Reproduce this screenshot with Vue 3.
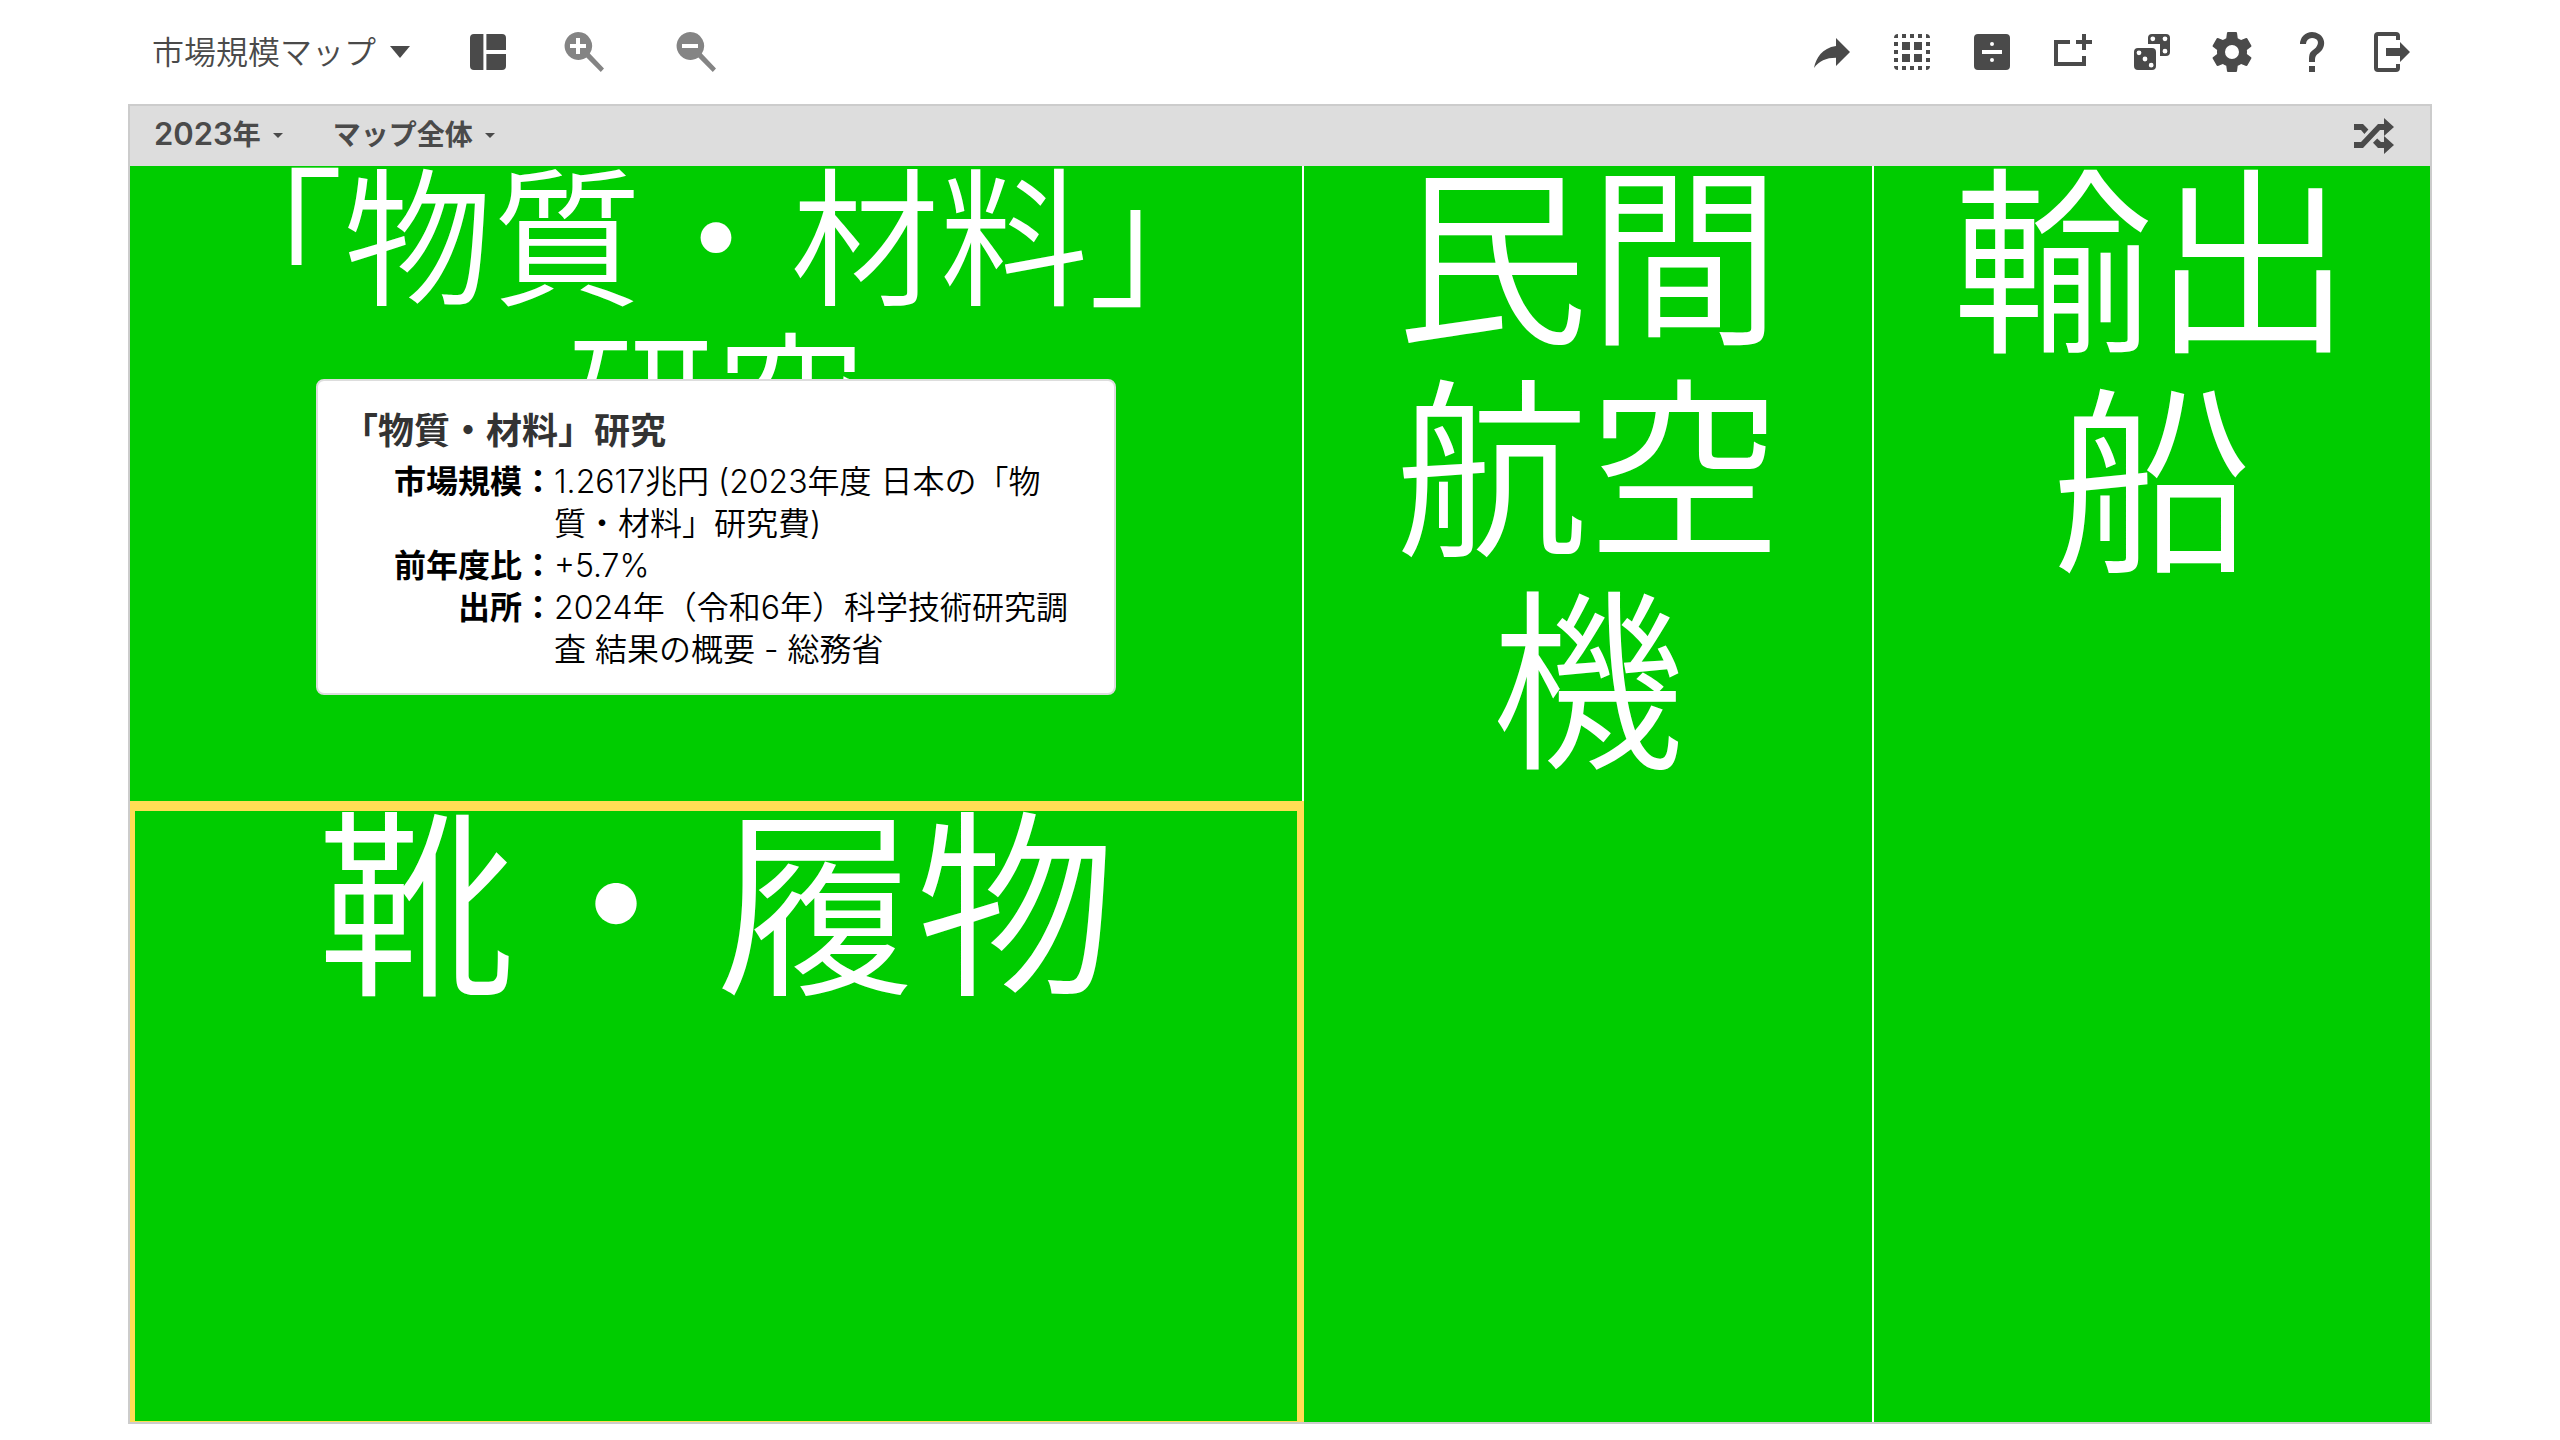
<template>
  <div class="page">
    <header class="toolbar">
      <button class="menu" type="button">市場規模マップ<span class="caret"></span></button>
      <button class="tool layout" type="button" aria-label="レイアウト">
        <svg viewBox="0 0 24 24"><path d="M5 3h4.700v18H5a2 2 0 0 1-2-2V5a2 2 0 0 1 2-2zM11.200 3H19a2 2 0 0 1 2 2v6h-9.800zM11.200 13H21v6a2 2 0 0 1-2 2h-7.800z" /></svg>
      </button>
      <button class="tool zoom" type="button" aria-label="拡大">
        <svg viewBox="0 0 24 24"><path fill-rule="evenodd" d="M9 2a7 7 0 0 1 5.900 10.800L22 20.200 20.400 22l-7.200-7.200A7 7 0 1 1 9 2zM8 5v3H5v2h3v3h2v-3h3V8h-3V5z" /></svg>
      </button>
      <button class="tool zoom" type="button" aria-label="縮小">
        <svg viewBox="0 0 24 24"><path fill-rule="evenodd" d="M9 2a7 7 0 0 1 5.900 10.800L22 20.200 20.400 22l-7.200-7.200A7 7 0 1 1 9 2zM5 8v2h8V8z" /></svg>
      </button>
      <div class="actions">
        <button v-for="a in actions" :key="a.label" class="tool" type="button" :aria-label="a.label">
          <svg viewBox="0 0 24 24"><path fill-rule="evenodd" :d="a.d" /></svg>
        </button>
      </div>
    </header>
    <main class="frame">
      <div class="bar">
        <button class="filter" type="button">
          <span><span class="digits">2023</span>年</span><span class="caret small"></span>
        </button>
        <button class="filter" type="button">マップ全体<span class="caret small"></span></button>
        <button class="tool shuffle" type="button" aria-label="シャッフル">
          <svg viewBox="0 0 24 24"><path d="M17 3l5 4.500-5 4.500V9h-2l-8.500 9H2v-3h3.500L14 6h3zM2 6h4.500l2.700 2.800-2 2.200L5.500 9H2zM13.600 13.300L15.500 15H17v-3l5 4.500-5 4.500v-3h-3l-2.500-2.600z" /></svg>
        </button>
      </div>
      <div class="map">
        <div class="column">
          <section class="tile research">
            <h1>「物質・材料」<br />研究</h1>
            <aside class="tip">
              <h2>「物質・材料」研究</h2>
              <dl>
                <template v-for="r in rows" :key="r.term">
                  <dt>{{ r.term }}：</dt>
                  <dd>{{ r.text }}</dd>
                </template>
              </dl>
            </aside>
          </section>
          <section class="tile shoes"><h1>靴・履物</h1></section>
        </div>
        <section class="tile aircraft"><h1>民間<br />航空<br />機</h1></section>
        <section class="tile ship"><h1>輸出<br />船</h1></section>
      </div>
    </main>
  </div>
</template>

<script setup>
const rows = [
  { term: '市場規模', text: '1.2617兆円 (2023年度 日本の「物質・材料」研究費)' },
  { term: '前年度比', text: '+5.7%' },
  { term: '出所', text: '2024年（令和6年）科学技術研究調査 結果の概要 - 総務省' }
]

const dot = (x, y, r = 1) => `M${x - r} ${y}a${r} ${r} 0 1 0 ${2 * r} 0a${r} ${r} 0 1 0 ${-2 * r} 0z`

const actions = [
  { label: '共有', d: 'M14 5l7 7-7 7v-4.100C9 14.900 5.500 16.500 3 20c1-5 4-10 11-11z' },
  {
    label: '選択',
    d: 'M5 3v2H3a2 2 0 0 1 2-2zM7 3h2v2H7zM11 3h2v2h-2zM15 3h2v2h-2zM19 3a2 2 0 0 1 2 2h-2zM3 7h2v2H3zM19 7h2v2h-2zM3 11h2v2H3zM19 11h2v2h-2zM3 15h2v2H3zM19 15h2v2h-2zM3 19h2v2a2 2 0 0 1-2-2zM7 19h2v2H7zM11 19h2v2h-2zM15 19h2v2h-2zM19 19h2a2 2 0 0 1-2 2zM7 7h4v4H7zM13 7h4v4h-4zM7 13h4v4H7zM13 13h4v4h-4z'
  },
  {
    label: '計算',
    d: 'M5 3h14a2 2 0 0 1 2 2v14a2 2 0 0 1-2 2H5a2 2 0 0 1-2-2V5a2 2 0 0 1 2-2zM7 11v2h10v-2z' + dot(12, 8) + dot(12, 16)
  },
  { label: '追加', d: 'M3 6h8v2H5v9h12v-3h2v5H3zM17 3h2v3h3v2h-3v3h-2V8h-3V6h3z' },
  {
    label: 'ランダム',
    d: 'M5 10h7a2 2 0 0 1 2 2v7a2 2 0 0 1-2 2H5a2 2 0 0 1-2-2v-7a2 2 0 0 1 2-2zM12 3h7a2 2 0 0 1 2 2v7a2 2 0 0 1-2 2h-3V8h-6V5a2 2 0 0 1 2-2z' +
      dot(5.5, 12.4, 1.2) + dot(8.5, 15.5, 1.2) + dot(11.6, 18.6, 1.2) + dot(12.4, 5.4, 1.2) + dot(18.5, 5.4, 1.2) + dot(18.5, 11.6, 1.2)
  },
  {
    label: '設定',
    d: 'M12 15.500A3.500 3.500 0 0 1 8.500 12 3.500 3.500 0 0 1 12 8.500a3.500 3.500 0 0 1 3.500 3.500 3.500 3.500 0 0 1-3.500 3.500m7.430-2.530c.04-.32.07-.64.07-.97s-.03-.66-.07-1l2.110-1.630c.19-.15.24-.42.12-.64l-2-3.460c-.12-.22-.39-.31-.61-.22l-2.490 1c-.52-.39-1.060-.73-1.690-.98l-.37-2.650A.506.506 0 0 0 14 2h-4c-.25 0-.46.18-.5.42l-.37 2.650c-.63.25-1.170.59-1.690.98l-2.490-1c-.22-.09-.49 0-.61.22l-2 3.460c-.13.22-.07.49.12.64L4.570 11c-.04.34-.07.67-.07 1s.03.65.07.97l-2.110 1.660c-.19.15-.25.42-.12.64l2 3.460c.12.22.39.3.61.22l2.490-1.010c.52.4 1.060.74 1.690.99l.37 2.650c.04.24.25.42.5.42h4c.25 0 .46-.18.5-.42l.37-2.650c.63-.26 1.170-.59 1.690-.99l2.490 1.010c.22.08.49 0 .61-.22l2-3.460c.12-.22.07-.49-.12-.64z'
  },
  {
    label: 'ヘルプ',
    d: 'M10.500 19h3v3h-3zM12 2c5.300.2 7.700 5.200 5 9-1.100 1.300-2.300 2-2.900 2.700-.6.800-.6 1.500-.6 3.300h-3c0-2.300 0-3.600.6-4.600.6-1 1.800-1.700 2.900-2.700C15.900 7.300 15 5.100 12 5a3 3 0 0 0-3 3H6a6 6 0 0 1 6-6z'
  },
  { label: 'ログアウト', d: 'M5 2h9a2 2 0 0 1 2 2v2h-2V4H5v16h9v-2h2v2a2 2 0 0 1-2 2H5a2 2 0 0 1-2-2V4a2 2 0 0 1 2-2zM16 7l5 5-5 5v-3H9v-4h7z' }
]
</script>

<style>
body {
  margin: 0;
  background: #fff;
}
</style>

<style scoped>
.page {
  display: flex;
  flex-direction: column;
  box-sizing: border-box;
  min-height: 100vh;
  padding: 0 5% 16px;
  font-family: Inter, "Noto Sans CJK JP", sans-serif;
  color: #4a4a4a;
}
button {
  display: flex;
  align-items: center;
  border: 0;
  padding: 0;
  background: none;
  color: inherit;
  font: inherit;
  cursor: pointer;
}
.toolbar {
  display: flex;
  align-items: center;
  height: 104px;
}
.menu {
  gap: 14px;
  margin: 0 38px 0 24px;
  padding-bottom: 4px;
  font-size: 32px;
  font-weight: 350;
}
.caret {
  margin-top: 4px;
  border: 10px solid transparent;
  border-top: 12px solid #4a4a4a;
  border-bottom: 0;
}
.caret.small {
  border-width: 5px 5px 0;
}
.tool {
  justify-content: center;
  width: 80px;
  height: 80px;
}
.tool svg {
  width: 48px;
  height: 48px;
  fill: currentColor;
}
.zoom {
  width: 112px;
  color: #848484;
}
.actions {
  display: flex;
  margin-left: auto;
}
.frame {
  display: flex;
  flex: 1;
  flex-direction: column;
  border: 2px solid #ccc;
}
.bar {
  display: flex;
  align-items: center;
  gap: 50px;
  height: 60px;
  padding: 0 16px 0 24px;
  background: #ddd;
}
.filter {
  gap: 12px;
  padding-bottom: 6px;
  font-size: 28px;
  font-weight: 600;
}
.digits {
  font-size: 31px;
}
.shuffle {
  height: 60px;
  margin-left: auto;
}
.map {
  display: flex;
  flex: 1;
  background: #fff;
}
.column {
  display: flex;
  flex: 1174;
  flex-direction: column;
}
.tile {
  display: flow-root;
  box-sizing: border-box;
  background: #00cc00;
  color: #fff;
  text-align: center;
}
.tile h1 {
  margin: -12px 0 0;
  font-size: 200px;
  font-weight: 350;
  line-height: 220px;
}
.research {
  position: relative;
  flex: 635;
  border-right: 2px solid #fff;
}
.research h1 {
  margin-top: -8px;
  font-size: 149px;
  line-height: 164px;
}
.shoes {
  flex: 610;
  border: solid #fd5;
  border-width: 10px 7px 1px 5px;
}
.shoes h1 {
  margin-top: -14px;
}
.aircraft {
  flex: 568;
  border-right: 2px solid #fff;
}
.aircraft h1 {
  font-size: 193px;
  line-height: 212px;
}
.ship {
  flex: 556;
}
.tip {
  position: absolute;
  top: 213px;
  left: 50%;
  box-sizing: border-box;
  width: 800px;
  margin-left: -400px;
  padding: 26px 40px 22px;
  border: 2px solid #ddd;
  border-radius: 8px;
  background: #fff;
  color: #000;
  font-size: 32px;
  font-weight: 350;
  line-height: 42px;
  text-align: left;
}
.tip h2 {
  margin: 0 0 6px -16px;
  color: #333;
  font-size: 36px;
  font-weight: 600;
  line-height: 48px;
}
.tip dl {
  display: grid;
  grid-template-columns: 196px 1fr;
  margin: 0;
}
.tip dt {
  font-weight: 700;
  text-align: right;
}
.tip dd {
  margin: 0;
}
</style>
